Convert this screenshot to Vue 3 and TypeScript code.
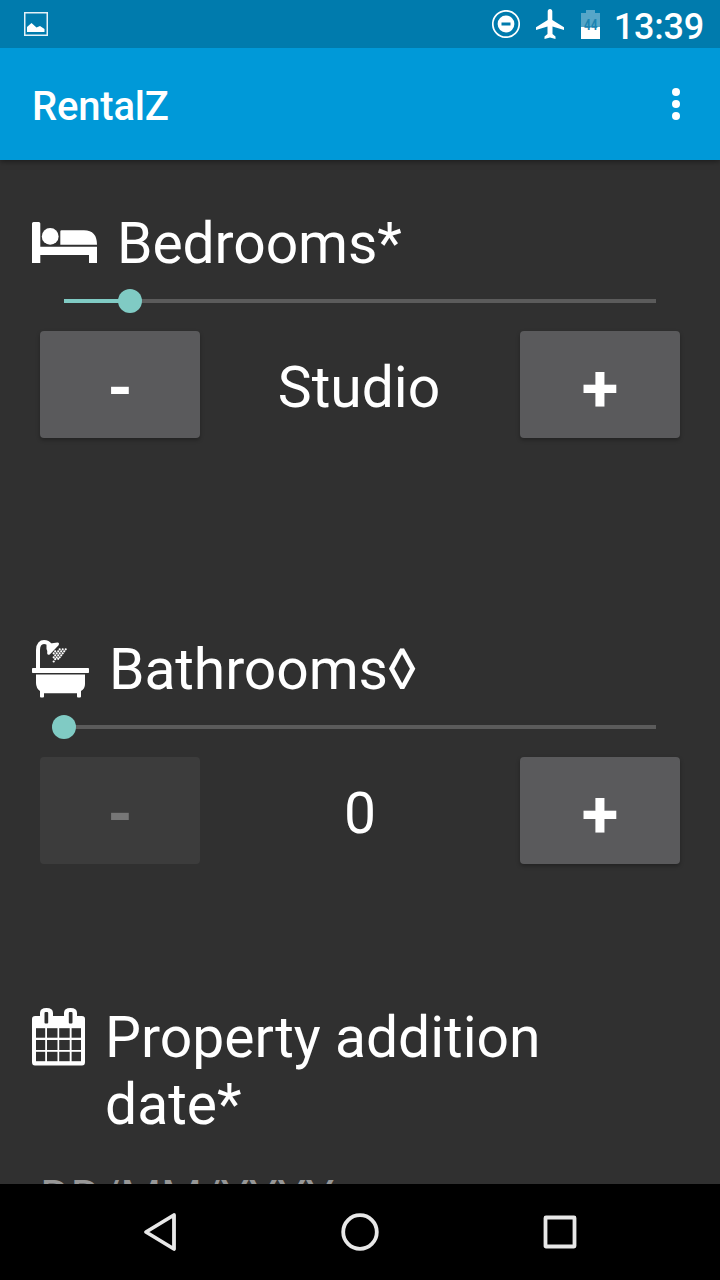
<script setup lang="ts">
import { ref } from 'vue'

interface Counter {
  id: string
  label: string
  value: number
  max: number
  zeroBased: boolean
}

const counters = ref<Counter[]>([
  { id: 'bedrooms', label: 'Bedrooms*', value: 1, max: 9, zeroBased: false },
  { id: 'bathrooms', label: 'Bathrooms◊', value: 0, max: 9, zeroBased: true },
])

const display = (c: Counter): string => (!c.zeroBased && c.value === 1 ? 'Studio' : String(c.value))

const step = (c: Counter, delta: number): void => {
  c.value = Math.min(c.max, Math.max(0, c.value + delta))
}

// Start and length of the calendar icon's day columns and rows
const cellX: number[][] = [[4, 9.2], [15, 10.5], [27.2, 10.5], [39.6, 9.4]]
const cellY: number[][] = [[20.2, 9.5], [32, 10], [43.8, 9.4]]

// Water drops falling from the shower head
const drops: number[][] = [
  [33.7, 9.3], [30.7, 9.3], [27.7, 9.3],
  [32.2, 11.3], [29.2, 11.3], [26.2, 11.3], [23.2, 11.3],
  [30.7, 13.3], [27.7, 13.3], [24.7, 13.3], [21.7, 13.3],
  [29.2, 15.3], [26.2, 15.3], [23.2, 15.3],
  [27.7, 17.3], [24.7, 17.3], [21.7, 17.3],
  [26.2, 18.8], [23.2, 19.2], [21.7, 21.5],
]
</script>

<template>
  <div class="screen">
    <header class="status">
      <svg class="status-image" width="24" height="24" viewBox="0 0 24 24">
        <rect x=".75" y=".75" width="22.5" height="22.5" fill="none" stroke="#e4f1f7" stroke-width="1.5" />
        <path d="M3 20V15L7.5 11L12.5 15.5L16 14L20.5 17V20Z" fill="#fff" />
      </svg>
      <div class="status-right">
        <svg class="dnd" width="28" height="28" viewBox="0 0 28 28">
          <circle cx="14" cy="14" r="13.2" fill="none" stroke="#fff" stroke-width="1.7" />
          <circle cx="14" cy="14" r="8.4" fill="#fff" />
          <rect x="9.5" y="12.5" width="9" height="3" fill="#007bad" />
        </svg>
        <svg class="plane" width="28" height="30" viewBox="0 0 28 30">
          <path d="M28 21V18.3L16.3 11V2.3C16.3 1 15.4 0 14 0S11.7 1 11.7 2.3V11L0 18.3V21L11.5 17.5V25L8.5 27.5V30L14 28.5L19.5 30V27.5L16.5 25V17.5Z" fill="#fff" />
        </svg>
        <svg class="battery" width="19" height="29" viewBox="0 0 19 29">
          <path d="M5 0H14V3H19V17H0V3H5Z" fill="#56a6c8" />
          <path d="M0 17H19V29H0Z" fill="#fff" />
          <text x="3" y="20" textLength="13.5" lengthAdjust="spacingAndGlyphs">44</text>
        </svg>
        <span class="clock">13:39</span>
      </div>
    </header>

    <div class="toolbar">
      <h1>RentalZ</h1>
      <svg width="8" height="32" viewBox="0 0 8 32" fill="#fff">
        <circle cx="4" cy="4" r="4" />
        <circle cx="4" cy="16" r="4" />
        <circle cx="4" cy="28" r="4" />
      </svg>
    </div>

    <main class="form">
      <section v-for="c in counters" :key="c.id" class="field" :class="c.id">
        <div class="heading">
          <svg v-if="c.id === 'bedrooms'" class="icon" width="65" height="41" viewBox="0 0 65 41" fill="#fff">
            <path d="M0 1.5Q0 0 1.5 0H6.8Q8.3 0 8.3 1.5V24.7H65V41H57V33H8.3V41H0Z" />
            <circle cx="18.2" cy="14.4" r="8.4" />
            <path d="M28.3 9.5Q28.3 8.3 29.5 8.3H52Q65 8.3 65 22.8H28.3Z" />
          </svg>
          <svg v-else class="icon" width="57" height="58" viewBox="0 0 57 58" fill="#fff">
            <path d="M6 30V10C6 4 9 2 12 2Q16 2 18 5" fill="none" stroke="#fff" stroke-width="4" />
            <path d="M14.5 4L25.5 2.6Q27.8 3 26.6 5.2L18 14.2Q15.8 15.5 15.2 13.5Q15.8 11 14.5 9Z" />
            <rect x="0" y="28" width="57" height="5" rx=".8" />
            <path d="M4 34.5H53V44Q53 49 49 51V56.5Q49 57.5 48 57.5H46Q45 57.5 45 56.5V53.3H12V56.5Q12 57.5 11 57.5H9Q8 57.5 8 56.5V51Q4 48 4 43Z" />
            <circle v-for="(d, i) in drops" :key="i" :cx="d[0]" :cy="d[1]" r="1.1" />
          </svg>
          <h2>{{ c.label }}</h2>
        </div>

        <div class="slider">
          <div class="fill" :style="{ width: (c.value / c.max) * 100 + '%' }"></div>
          <div class="thumb" :style="{ left: (c.value / c.max) * 100 + '%' }"></div>
        </div>

        <div class="stepper">
          <button type="button" :disabled="c.value === 0" @click="step(c, -1)"><span class="minus">-</span></button>
          <output>{{ display(c) }}</output>
          <button type="button" :disabled="c.value === c.max" @click="step(c, 1)"><span class="plus">+</span></button>
        </div>
      </section>

      <section class="field date">
        <div class="heading">
          <svg class="icon" width="53" height="58" viewBox="0 0 53 58">
            <path d="M3 8H8V5Q8 0 14.5 0T21 5V8H32V5Q32 0 38.5 0T45 5V8H50Q53 8 53 11V54Q53 57.5 50 57.5H3Q0 57.5 0 54V11Q0 8 3 8Z" fill="#fff" />
            <rect x="12.5" y="4" width="3.7" height="11.5" rx="1" fill="#303030" />
            <rect x="36.8" y="4" width="3.7" height="11.5" rx="1" fill="#303030" />
            <template v-for="y in cellY" :key="y[0]">
              <rect v-for="x in cellX" :key="x[0]" :x="x[0]" :y="y[0]" :width="x[1]" :height="y[1]" fill="#303030" />
            </template>
          </svg>
          <h2>Property addition date*</h2>
        </div>
        <div class="hint">DD/MM/YYYY</div>
      </section>
    </main>

    <nav class="navbar">
      <svg width="34" height="40" viewBox="0 0 34 40"><path d="M31 3L3 20L31 37Z" /></svg>
      <svg width="40" height="40" viewBox="0 0 40 40"><circle cx="20" cy="20" r="16.8" /></svg>
      <svg width="34" height="40" viewBox="0 0 34 40"><rect x="2.5" y="5.5" width="29" height="29" rx=".5" /></svg>
    </nav>
  </div>
</template>

<style>
html,
body {
  margin: 0;
  background: #303030;
}
</style>

<style scoped>
.screen {
  width: 720px;
  height: 1280px;
  display: flex;
  flex-direction: column;
  overflow: hidden;
  background: #303030;
  color: #fff;
  font-family: Roboto, sans-serif;
}

svg {
  display: block;
  flex: none;
}

h1,
h2 {
  margin: 0;
}

.status {
  position: relative;
  z-index: 1;
  flex: none;
  height: 48px;
  padding: 0 16px 0 24px;
  box-sizing: border-box;
  display: flex;
  align-items: center;
  justify-content: space-between;
  background: #007bad;
}

.status-right {
  display: flex;
  align-items: center;
}

.plane {
  margin-left: 16px;
}

.battery {
  margin: 0 14px 0 17px;
}

.battery text {
  font-size: 14px;
  font-weight: 700;
  fill: #1b83b1;
}

.clock {
  font-size: 36px;
  line-height: 42px;
  font-weight: 500;
  letter-spacing: -0.2px;
  padding-top: 6px;
  height: 42px;
}

.toolbar {
  flex: none;
  height: 112px;
  padding: 0 40px 0 32px;
  box-sizing: border-box;
  display: flex;
  align-items: center;
  justify-content: space-between;
  background: #0099d8;
  box-shadow: 0 1px 6px rgba(0, 0, 0, 0.5);
}

h1 {
  font-size: 40px;
  line-height: 48px;
  font-weight: 500;
  letter-spacing: -0.2px;
  padding-top: 6px;
}

.form {
  flex: 1;
  min-height: 0;
  overflow: hidden;
  padding: 50px 32px 0;
}

.heading {
  display: flex;
  align-items: flex-start;
  gap: 20px;
}

h2 {
  font-size: 57px;
  line-height: 67px;
  font-weight: 400;
  letter-spacing: -0.1px;
}

.bedrooms .icon {
  margin-top: 12px;
}

.bathrooms .icon {
  margin-top: 4px;
}

.date .icon {
  margin-top: 4px;
}

.date h2 {
  letter-spacing: 0;
}

.bedrooms {
  height: 426px;
}

.bathrooms {
  height: 368px;
}

.slider {
  position: relative;
  height: 4px;
  margin: 22px 32px 28px;
  background: #5b5b5b;
}

.fill {
  height: 4px;
  background: #80cbc4;
}

.thumb {
  position: absolute;
  top: -10px;
  width: 24px;
  height: 24px;
  margin-left: -12px;
  border-radius: 50%;
  background: #80cbc4;
}

.stepper {
  display: grid;
  grid-template-columns: 160px 1fr 160px;
  height: 107px;
  margin: 0 8px;
}

button {
  display: flex;
  align-items: center;
  justify-content: center;
  padding: 8px 0 0;
  border: 0;
  border-radius: 4px;
  background: #5a5a5c;
  color: #fff;
  font: 700 64px/75px Roboto, sans-serif;
  box-shadow: 0 2px 4px rgba(0, 0, 0, 0.3);
}

.plus {
  font-size: 67px;
}

button:disabled {
  background: #3c3c3c;
  color: #777;
  box-shadow: none;
}

output {
  font-size: 57px;
  line-height: 67px;
  padding: 23px 2px 0 0;
  text-align: center;
}

.bathrooms output {
  padding-right: 0;
}

.hint {
  margin: 31px 8px 0;
  font-size: 47px;
  line-height: 56px;
  letter-spacing: -0.3px;
  color: #979797;
  white-space: nowrap;
}

.navbar {
  flex: none;
  height: 96px;
  padding: 0 143px;
  display: flex;
  align-items: center;
  justify-content: space-between;
  background: #000;
}

.navbar svg {
  fill: none;
  stroke: #e8e8e8;
  stroke-width: 3.8;
  stroke-linejoin: round;
}
</style>
